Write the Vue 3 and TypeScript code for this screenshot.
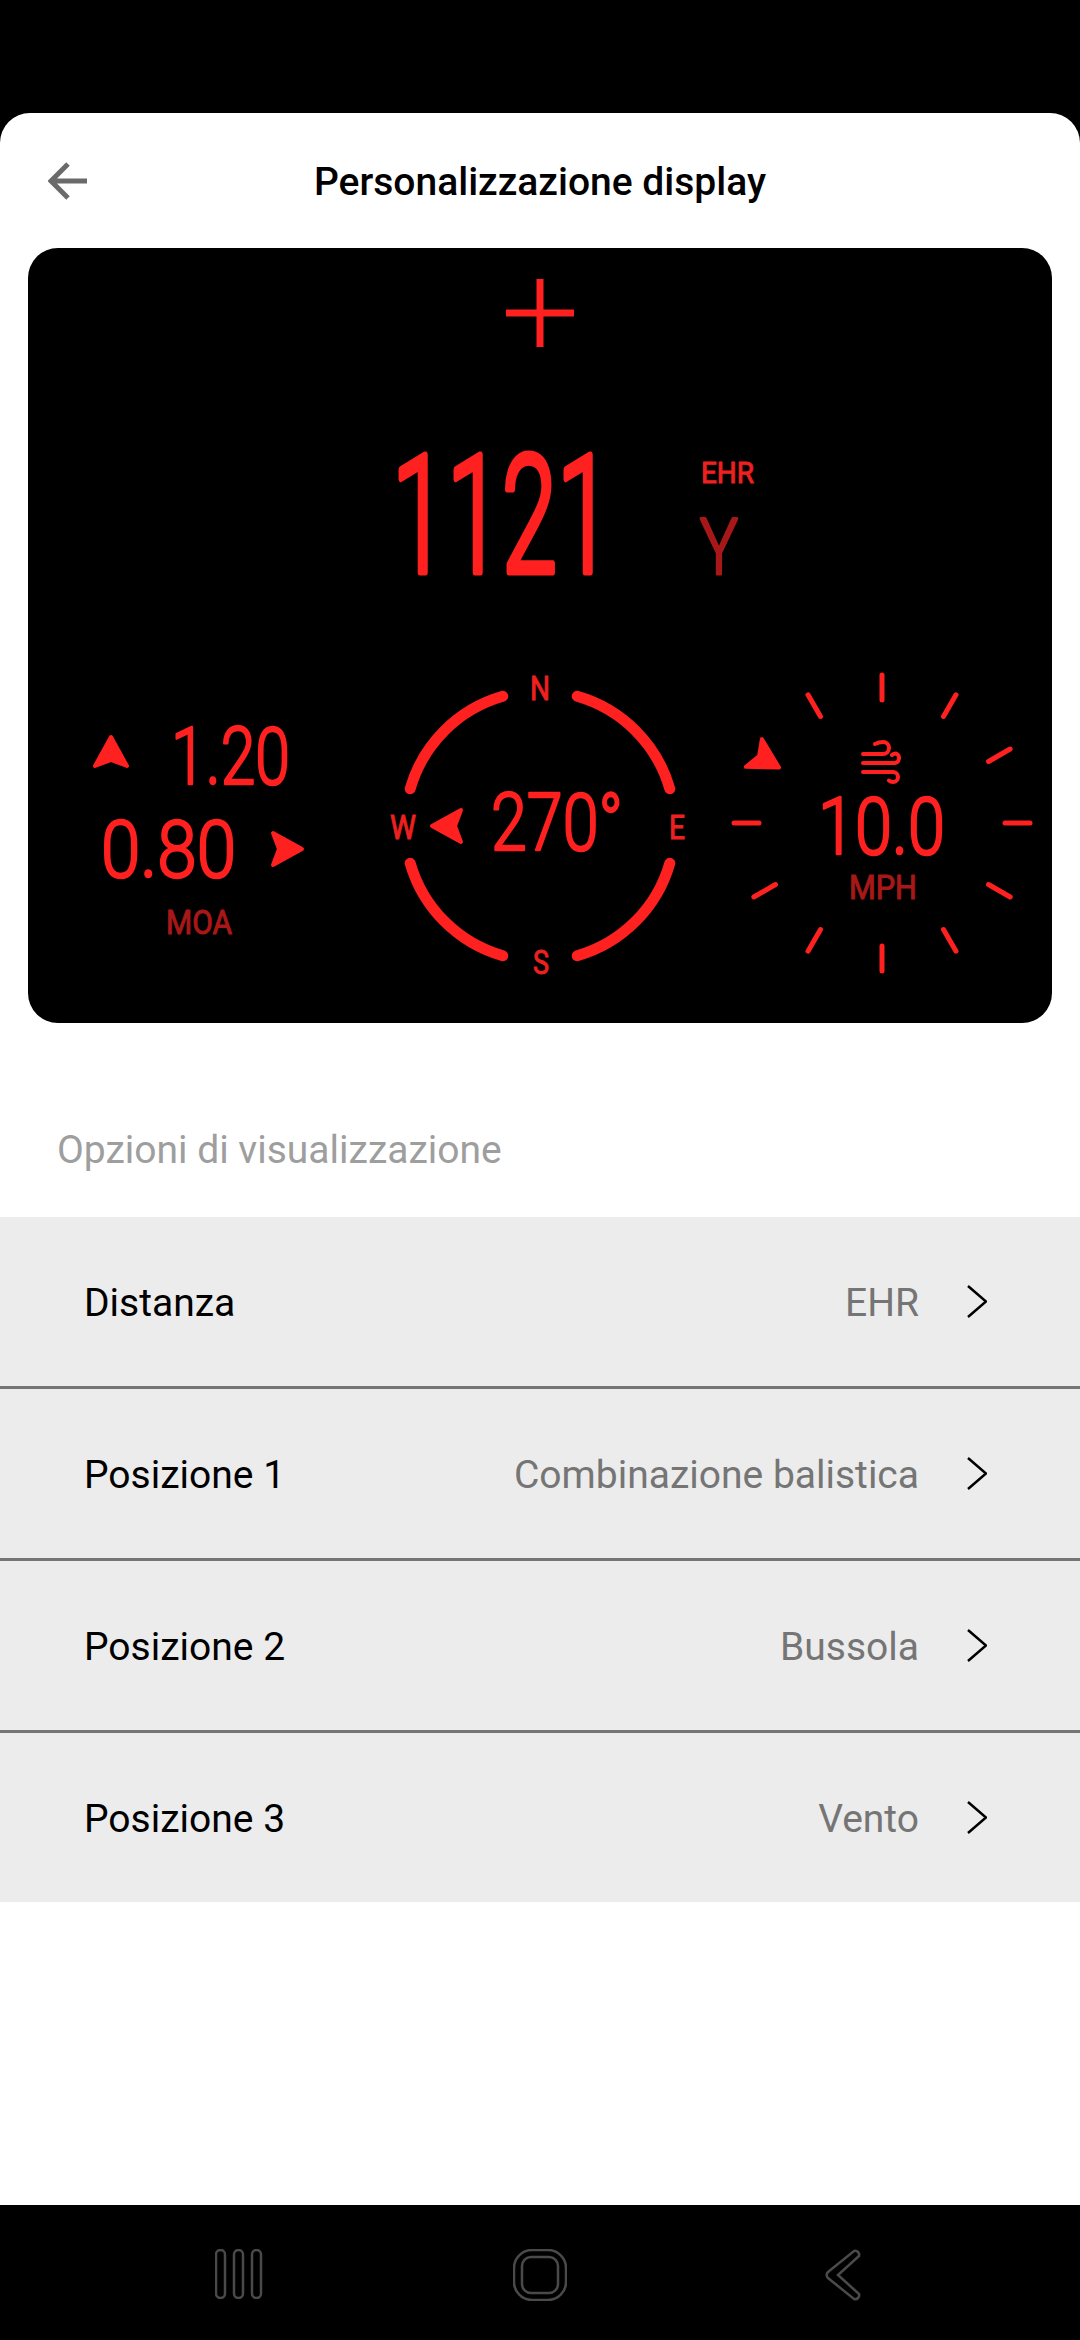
<template>
  <div class="phone">
    <div class="status-gap"></div>

    <div class="sheet">
      <header class="top-bar">
        <svg class="back" viewBox="0 0 40 38" fill="none">
          <path d="M20 2 3 19l17 17M3 19h36" stroke="#6a6a6a" stroke-width="5" />
        </svg>
        <h1 class="title">Personalizzazione display</h1>
      </header>

      <section class="display">
        <svg class="reticle" viewBox="0 0 68 68">
          <path d="M34 0v68M0 34h68" />
        </svg>

        <svg class="range" viewBox="395 454 362 124">
          <text class="hud big" x="392" y="572" textLength="220" lengthAdjust="spacingAndGlyphs">1121</text>
          <text class="hud-label" x="701" y="483" textLength="53" lengthAdjust="spacingAndGlyphs">EHR</text>
          <text class="hud-dim tall" x="700" y="574" textLength="38" lengthAdjust="spacingAndGlyphs">Y</text>
        </svg>

        <div class="gauges">
          <svg viewBox="90 675 295 300">
            <path class="arrow" transform="translate(111 752)" d="M0-15 16 14 0 8-16 14Z" />
            <text class="hud mid" x="171" y="784" textLength="119" lengthAdjust="spacingAndGlyphs">1.20</text>
            <text class="hud mid" x="101" y="877" textLength="135" lengthAdjust="spacingAndGlyphs">0.80</text>
            <path class="arrow" transform="translate(287 849) rotate(90)" d="M0-15 16 14 0 8-16 14Z" />
            <text class="hud-dim small" x="166" y="934" textLength="66" lengthAdjust="spacingAndGlyphs">MOA</text>
          </svg>

          <svg viewBox="385 675 343 300">
            <g class="ring">
              <path d="M410.200 788.800A135 135 0 0 1 502.800 696.200" />
              <path d="M577.200 696.200A135 135 0 0 1 669.800 788.800" />
              <path d="M669.800 863.200A135 135 0 0 1 577.200 955.800" />
              <path d="M502.800 955.800A135 135 0 0 1 410.200 863.200" />
            </g>
            <text class="hud-label compass" x="530" y="700" textLength="20" lengthAdjust="spacingAndGlyphs">N</text>
            <text class="hud-label compass" x="390" y="839" textLength="26" lengthAdjust="spacingAndGlyphs">W</text>
            <text class="hud-label compass" x="669" y="839" textLength="16" lengthAdjust="spacingAndGlyphs">E</text>
            <text class="hud-label compass" x="533" y="974" textLength="16" lengthAdjust="spacingAndGlyphs">S</text>
            <path class="arrow" transform="translate(447 826) rotate(-90)" d="M0-15 16 14 0 8-16 14Z" />
            <text class="hud mid" x="491" y="850" textLength="132" lengthAdjust="spacingAndGlyphs">270°</text>
          </svg>

          <svg viewBox="728 675 310 300">
            <line v-for="tick in ticks" :key="tick.angle" class="tick" :x1="tick.x1" :y1="tick.y1" :x2="tick.x2" :y2="tick.y2" />
            <path class="arrow" transform="translate(766 760) rotate(120)" d="M0-15 16 14 0 8-16 14Z" />
            <path class="wind" d="M863 754h20a6 6 0 0 0 0-12c-3 0-6 1-8 2M863 763h32a5 5 0 0 0 1-9.500c-2 0-3 .5-4 1.500M863 772h30a5 5 0 0 1 0 10c-2 0-3-.5-4-1.500" />
            <text class="hud mid" x="818" y="854" textLength="127" lengthAdjust="spacingAndGlyphs">10.0</text>
            <text class="hud-dim small" x="849" y="899" textLength="68" lengthAdjust="spacingAndGlyphs">MPH</text>
          </svg>
        </div>
      </section>

      <h2 class="section-label">Opzioni di visualizzazione</h2>

      <ul class="options">
        <li v-for="row in rows" :key="row.label" class="option">
          <span class="option-label">{{ row.label }}</span>
          <span class="option-value">{{ row.value }}</span>
          <svg class="chevron" viewBox="0 0 20 33" fill="none">
            <path d="m1 1 18 15.500L1 32" stroke="#000" stroke-width="2.500" />
          </svg>
        </li>
      </ul>
    </div>

    <nav class="nav-bar">
      <svg class="nav-recents" viewBox="0 0 50 50" fill="none">
        <rect x="1" y="1" width="9" height="48" rx="4.500" />
        <rect x="19" y="1" width="9" height="48" rx="4.500" />
        <rect x="37" y="1" width="9" height="48" rx="4.500" />
      </svg>
      <svg class="nav-home" viewBox="0 0 54 52" fill="none">
        <rect x="1" y="1" width="52" height="50" rx="18" />
        <rect x="9" y="8" width="36" height="36" rx="9" />
      </svg>
      <svg class="nav-back" viewBox="0 0 36 52" fill="none">
        <path d="M29 2a4 4 0 0 1 5 5L13 26l21 19a4 4 0 0 1-5 5L3 29a4 4 0 0 1 0-6Z" />
      </svg>
    </nav>
  </div>
</template>

<script setup lang="ts">
interface OptionRow {
  label: string
  value: string
}

const rows: OptionRow[] = [
  { label: 'Distanza', value: 'EHR' },
  { label: 'Posizione 1', value: 'Combinazione balistica' },
  { label: 'Posizione 2', value: 'Bussola' },
  { label: 'Posizione 3', value: 'Vento' }
]

// Wind dial ticks, the 300 degree one is where the arrow sits
const ticks = [0, 30, 60, 90, 120, 150, 180, 210, 240, 270, 330].map((angle) => {
  const rad = (angle * Math.PI) / 180
  const point = (r: number) => [882 + r * Math.sin(rad), 823 - r * Math.cos(rad)]
  const [x1, y1] = point(123)
  const [x2, y2] = point(148)
  return { angle, x1, y1, x2, y2 }
})
</script>

<style>
html,
body {
  margin: 0;
  background: #000;
}
</style>

<style scoped>
.phone {
  width: 1080px;
  height: 2340px;
  display: flex;
  flex-direction: column;
  background: #000;
  font-family: Roboto, "Noto Sans", sans-serif;
  overflow: hidden;
}

.status-gap {
  height: 113px;
  flex-shrink: 0;
}

.sheet {
  flex: 1;
  background: #fff;
  border-radius: 30px 30px 0 0;
  overflow: hidden;
}

.top-bar {
  height: 135px;
  position: relative;
  display: flex;
  align-items: center;
  justify-content: center;
}

.back {
  position: absolute;
  left: 48px;
  top: 49px;
  width: 40px;
  height: 38px;
}

.title {
  margin: 0;
  padding-top: 3px;
  font-size: 39px;
  font-weight: 500;
  color: #000;
}

.display {
  margin: 0 28px;
  height: 775px;
  background: #000;
  border-radius: 30px;
  display: flex;
  flex-direction: column;
}

.reticle {
  width: 68px;
  height: 68px;
  margin: 31px auto 0;
  flex-shrink: 0;
}

.reticle path {
  stroke: #ff2020;
  stroke-width: 7;
}

.range {
  width: 362px;
  height: 124px;
  margin: 107px 0 0 367px;
  flex-shrink: 0;
  overflow: visible;
}

.gauges {
  display: grid;
  grid-template-columns: 295px 343px 310px;
  height: 300px;
  margin-top: 97px;
  padding-left: 62px;
}

.gauges svg {
  width: 100%;
  height: 300px;
  overflow: visible;
}

.hud,
.hud-label,
.hud-dim {
  font-family: Roboto, sans-serif;
  stroke-linejoin: round;
  stroke-linecap: round;
}

.hud {
  fill: #ff2020;
  stroke: #ff2020;
  font-weight: 300;
}

.big {
  font-size: 163px;
  font-weight: 300;
  stroke-width: 7px;
}

.mid {
  font-size: 80px;
  stroke-width: 2.5px;
}

.hud-label {
  fill: #ee2020;
  stroke: #ee2020;
  stroke-width: 1px;
  font-size: 29px;
}

.compass {
  font-size: 34px;
}

.hud-dim {
  fill: #a81818;
  stroke: #a81818;
  stroke-width: 1px;
  font-size: 33px;
}

.tall {
  font-size: 78px;
  stroke-width: 3px;
  font-weight: 300;
}

.arrow {
  fill: #ff2020;
  stroke: #ff2020;
  stroke-width: 4;
  stroke-linejoin: round;
}

.ring path {
  fill: none;
  stroke: #ff2020;
  stroke-width: 11;
  stroke-linecap: round;
}

.tick {
  stroke: #ff2020;
  stroke-width: 5;
  stroke-linecap: round;
}

.wind {
  fill: none;
  stroke: #ff2020;
  stroke-width: 4;
  stroke-linecap: round;
}

.section-label {
  margin: 0;
  padding: 60px 57px 0;
  height: 194px;
  display: flex;
  align-items: center;
  box-sizing: border-box;
  font-size: 39px;
  font-weight: 400;
  color: #9e9e9e;
}

.options {
  list-style: none;
  margin: 0;
  padding: 0;
}

.option {
  height: 169px;
  background: #ececec;
  display: flex;
  align-items: center;
  padding: 0 93px 0 84px;
  border-bottom: 3px solid #757575;
}

.option:last-child {
  border-bottom: 0;
}

.option-label {
  flex: 1;
  padding-top: 3px;
  font-size: 39px;
  color: #000;
}

.option-value {
  padding-top: 3px;
  font-size: 39px;
  color: #757575;
}

.chevron {
  width: 20px;
  height: 33px;
  margin-left: 48px;
}

.nav-bar {
  height: 135px;
  flex-shrink: 0;
  background: #000;
  position: relative;
}

.nav-bar svg {
  position: absolute;
  top: 44px;
}

.nav-bar rect,
.nav-bar path {
  stroke: #4a4a4a;
  stroke-width: 2.500;
}

.nav-recents {
  left: 215px;
  width: 50px;
  height: 50px;
}

.nav-home {
  left: 513px;
  width: 54px;
  height: 52px;
}

.nav-back {
  left: 825px;
  width: 36px;
  height: 52px;
}
</style>
